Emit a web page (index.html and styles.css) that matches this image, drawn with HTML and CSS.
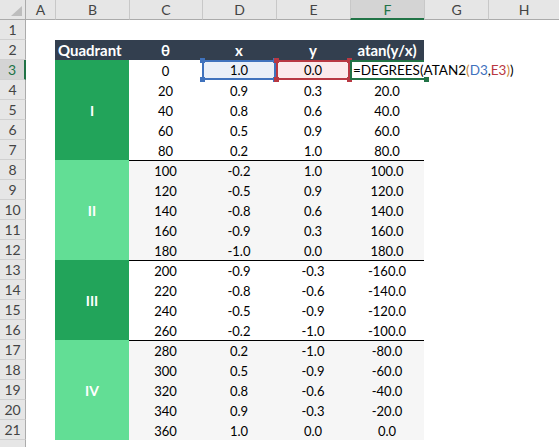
FILE: index.html
```html
<!DOCTYPE html>
<html>
<head>
<meta charset="utf-8">
<link rel="stylesheet" href="styles.css">
</head>
<body>
<div class="sheet">
  <div class="corner"><div class="tri"></div></div>
  <div class="ch first">A</div>
  <div class="ch">B</div>
  <div class="ch">C</div>
  <div class="ch">D</div>
  <div class="ch">E</div>
  <div class="ch on">F</div>
  <div class="ch">G</div>
  <div class="ch">H</div>

  <div class="rh">1</div>

  <div class="rh">2</div>
  <div class="hd b left">Quadrant</div>
  <div class="hd c">θ</div>
  <div class="hd d">x</div>
  <div class="hd e">y</div>
  <div class="hd f">atan(y/x)</div>

  <div class="rh on">3</div>
  <div class="q q1 dark">I</div>
  <div class="n c">0</div>
  <div class="n d refd">1.0<i class="h tl"></i><i class="h tr"></i><i class="h bl"></i><i class="h br"></i></div>
  <div class="n e refe">0.0<i class="h tl"></i><i class="h tr"></i><i class="h bl"></i><i class="h br"></i></div>
  <div class="f edit"><span class="ftext">=DEGREES(ATAN2<span class="po">(</span><span class="r1">D3</span>,<span class="r2">E3</span><span class="po">)</span>)</span><span class="caret"></span><i class="h gbr"></i></div>

  <div class="rh">4</div><div class="n c">20</div><div class="n d">0.9</div><div class="n e">0.3</div><div class="n f">20.0</div>
  <div class="rh">5</div><div class="n c">40</div><div class="n d">0.8</div><div class="n e">0.6</div><div class="n f">40.0</div>
  <div class="rh">6</div><div class="n c">60</div><div class="n d">0.5</div><div class="n e">0.9</div><div class="n f">60.0</div>
  <div class="rh">7</div><div class="n c">80</div><div class="n d">0.2</div><div class="n e">1.0</div><div class="n f">80.0</div>

  <div class="rh">8</div><div class="q q2 light">II</div><div class="n c g bt">100</div><div class="n d g bt">-0.2</div><div class="n e g bt">1.0</div><div class="n f g bt">100.0</div>
  <div class="rh">9</div><div class="n c g">120</div><div class="n d g">-0.5</div><div class="n e g">0.9</div><div class="n f g">120.0</div>
  <div class="rh">10</div><div class="n c g">140</div><div class="n d g">-0.8</div><div class="n e g">0.6</div><div class="n f g">140.0</div>
  <div class="rh">11</div><div class="n c g">160</div><div class="n d g">-0.9</div><div class="n e g">0.3</div><div class="n f g">160.0</div>
  <div class="rh">12</div><div class="n c g">180</div><div class="n d g">-1.0</div><div class="n e g">0.0</div><div class="n f g">180.0</div>

  <div class="rh">13</div><div class="q q3 dark">III</div><div class="n c bt">200</div><div class="n d bt">-0.9</div><div class="n e bt">-0.3</div><div class="n f bt">-160.0</div>
  <div class="rh">14</div><div class="n c">220</div><div class="n d">-0.8</div><div class="n e">-0.6</div><div class="n f">-140.0</div>
  <div class="rh">15</div><div class="n c">240</div><div class="n d">-0.5</div><div class="n e">-0.9</div><div class="n f">-120.0</div>
  <div class="rh">16</div><div class="n c">260</div><div class="n d">-0.2</div><div class="n e">-1.0</div><div class="n f">-100.0</div>

  <div class="rh">17</div><div class="q q4 light">IV</div><div class="n c g bt">280</div><div class="n d g bt">0.2</div><div class="n e g bt">-1.0</div><div class="n f g bt">-80.0</div>
  <div class="rh">18</div><div class="n c g">300</div><div class="n d g">0.5</div><div class="n e g">-0.9</div><div class="n f g">-60.0</div>
  <div class="rh">19</div><div class="n c g">320</div><div class="n d g">0.8</div><div class="n e g">-0.6</div><div class="n f g">-40.0</div>
  <div class="rh">20</div><div class="n c g">340</div><div class="n d g">0.9</div><div class="n e g">-0.3</div><div class="n f g">-20.0</div>
  <div class="rh">21</div><div class="n c g">360</div><div class="n d g">1.0</div><div class="n e g">0.0</div><div class="n f g">0.0</div>

  <div class="rh"></div>
</div>
</body>
</html>
```

FILE: styles.css
```css
html, body {
  margin: 0;
  padding: 0;
  background: #fff;
  overflow: hidden;
}
body {
  font-family: Lato, "Open Sans", sans-serif;
  font-size: 13px;
  color: #000;
}
.sheet {
  display: grid;
  grid-template-columns: 26px 29px 74px 73px 74px 74px 74px 64px 71px;
  grid-template-rows: 20px;
  grid-auto-rows: 20px;
  width: 559px;
  height: 447px;
  overflow: hidden;
}
.corner {
  box-sizing: border-box;
  background: #E6E6E6;
  border-right: 1px solid #ABABAB;
  border-bottom: 1px solid #ABABAB;
  display: flex;
  justify-content: flex-end;
  align-items: flex-end;
  padding: 0 3px 3px 0;
}
.tri {
  width: 0;
  height: 0;
  border-left: 11px solid transparent;
  border-bottom: 10px solid #BDBDBD;
}
.ch {
  box-sizing: border-box;
  background: #E6E6E6;
  border-bottom: 1px solid #ABABAB;
  border-left: 1px solid #C8C8C8;
  display: flex;
  align-items: center;
  justify-content: center;
  color: #444;
  font-size: 14px;
}
.ch.first { border-left: none; }
.ch.on {
  background: #D4D4D4;
  color: #217346;
  border-bottom: 2px solid #217346;
}
.rh {
  grid-column: 1;
  box-sizing: border-box;
  background: #E6E6E6;
  border-right: 1px solid #ABABAB;
  border-bottom: 1px solid #D0D0D0;
  display: flex;
  align-items: center;
  justify-content: center;
  color: #444;
  font-size: 14px;
}
.rh.on {
  background: #D4D4D4;
  color: #217346;
  border-right: 2px solid #217346;
}
.b { grid-column: 3; }
.c { grid-column: 4; }
.d { grid-column: 5; }
.e { grid-column: 6; }
.f { grid-column: 7; }
.n {
  box-sizing: border-box;
  display: flex;
  align-items: center;
  justify-content: center;
  position: relative;
  padding-top: 1px;
}
.hd {
  background: #333F4F;
  color: #fff;
  font-weight: bold;
  font-size: 15px;
  display: flex;
  align-items: center;
  justify-content: center;
}
.hd.left {
  justify-content: flex-start;
  padding-left: 3px;
}
.q {
  grid-column: 3;
  color: #fff;
  font-weight: bold;
  font-size: 14px;
  display: flex;
  align-items: center;
  justify-content: center;
}
.q1, .q2, .q4 { grid-row: span 5; }
.q3 { grid-row: span 4; }
.dark { background: #22A45A; }
.light { background: #62DE95; }
.g { background: #F6F6F6; }
.bt { border-top: 1px solid #000; }

.refd {
  background: #E9EFF8;
  border: 2px solid #3F72BD;
  z-index: 1;
  padding-top: 0;
}
.refe {
  background: #FBEAEB;
  border: 2px solid #B83842;
  z-index: 2;
  padding-top: 0;
}
.h {
  position: absolute;
  width: 5px;
  height: 5px;
}
.refd .h { background: #3F72BD; }
.refe .h { background: #B83842; }
.h.tl { top: -4px; left: -4px; }
.h.tr { top: -4px; right: -4px; }
.h.bl { bottom: -4px; left: -4px; }
.h.br { bottom: -4px; right: -4px; }
.edit {
  box-sizing: border-box;
  position: relative;
  z-index: 3;
  background: #fff;
  border-left: 2px solid #217346;
  border-top: 2px solid #217346;
  border-bottom: 2px solid #217346;
  display: flex;
  align-items: center;
  white-space: nowrap;
  padding-left: 1px;
  overflow: visible;
}
.ftext {
  font-size: 13.5px;
}
.po { color: #C98A3C; }
.r1 { color: #3F72BD; }
.r2 { color: #B83842; }
.caret {
  display: inline-block;
  width: 1px;
  height: 17px;
  background: #000;
  margin-left: 2px;
}
.h.gbr {
  background: #217346;
  bottom: -4px;
  right: -5px;
}
```
